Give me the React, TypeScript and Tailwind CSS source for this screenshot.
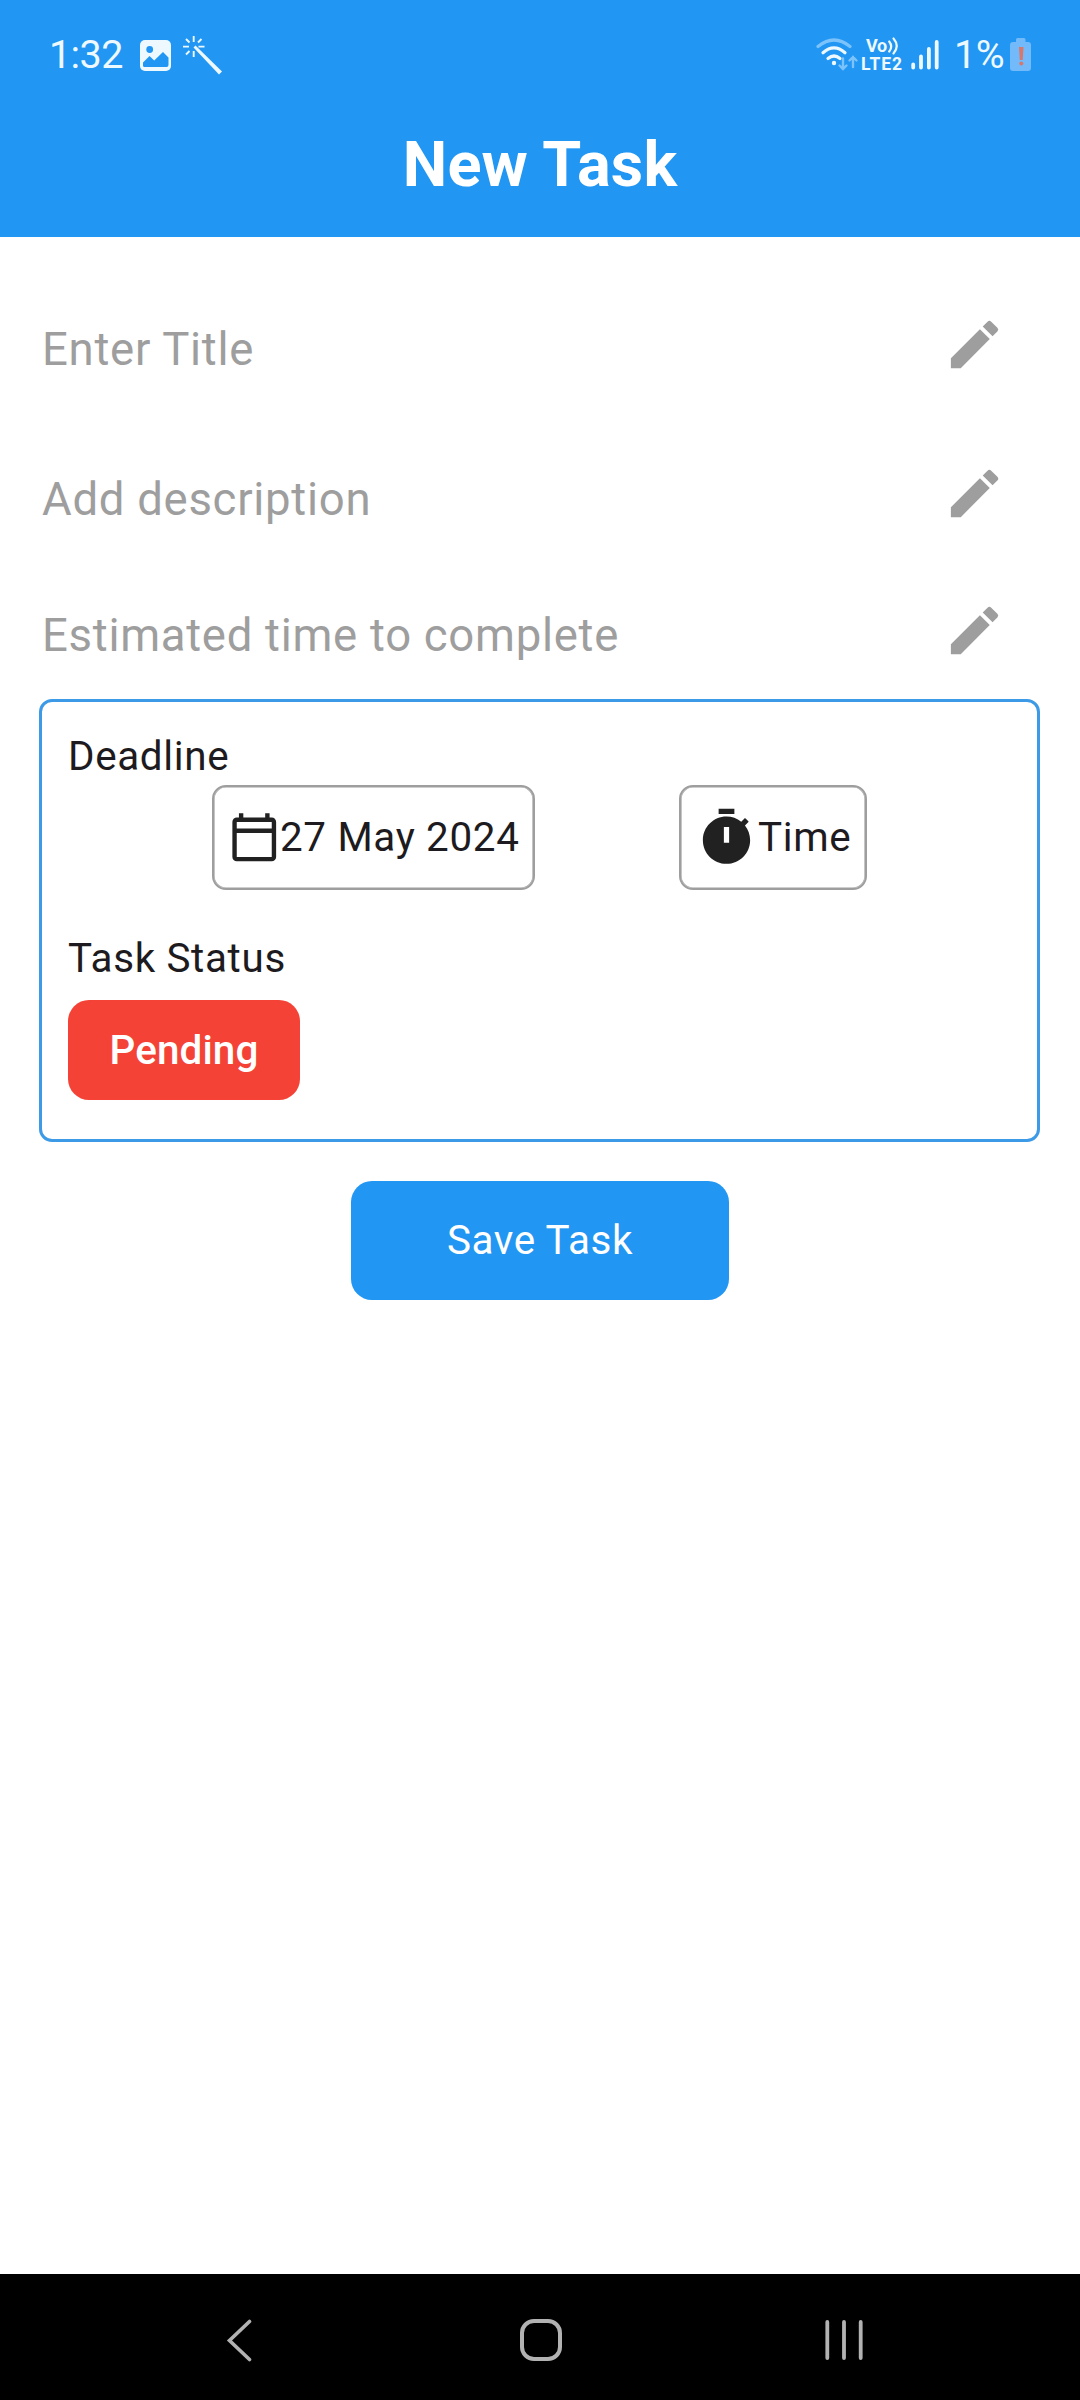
import React from "react";

function Pencil() {
  return (
    <svg className="h-[63px] w-[63px] shrink-0" viewBox="0 0 24 24" fill="#9e9e9e">
      <path d="M3 17.25V21h3.75L17.81 9.94l-3.75-3.75L3 17.25zM20.71 7.04a.996.996 0 0 0 0-1.41l-2.34-2.34a.996.996 0 0 0-1.41 0l-1.83 1.83 3.75 3.75 1.83-1.83z" />
    </svg>
  );
}

function Field({ label, offset = "pt-[10px]" }: { label: string; offset?: string }) {
  return (
    <div className="flex h-[63px] items-center justify-between pl-[42px] pr-[74px]">
      <span className={`${offset} text-[45.5px] leading-[63px] tracking-[0.72px] text-[#9e9e9e]`}>{label}</span>
      <Pencil />
    </div>
  );
}

function StatusBar() {
  return (
    <div className="flex h-[107px] items-start text-[#eef9ff]">
      <span className="ml-[49px] mt-[31px] w-[91px] text-[39.5px] leading-[48px] tracking-[-0.6px]">1:32</span>
      <svg className="mt-[36px] h-[40px] w-[31px]" viewBox="140 36 31 40">
        <rect x="140" y="40" width="31" height="31" rx="5" fill="#eef9ff" />
        <circle cx="149.7" cy="49.5" r="3.4" fill="#2196f3" />
        <path d="M143 66v-3.500l6.500-6.500 4.700 4.500 8.800-8.500 5.500 5.500V65a2 2 0 0 1-2 2H144.500a1.500 1.500 0 0 1-1.500-1z" fill="#2196f3" />
      </svg>
      <svg className="ml-[10px] mt-[34px] h-[42px] w-[43px]" viewBox="181 34 43 42" fill="none" stroke="#eef9ff">
        <path d="M193.500 47.500l2-2L222 71.500l-3 3z" fill="#eef9ff" stroke="none" />
        <path d="M193.700 36v6M193.700 51v6M183 46.600h6M198.500 46.600h6M186 39l3.500 3.500M201.500 39l-3.500 3.500M186 54.500l3.500-3.500" strokeWidth="1.900" />
      </svg>
      <div className="flex-1" />
      <svg className="mt-[34px] h-[42px] w-[44px]" viewBox="815 34 44 42" fill="none" strokeLinecap="round">
        <path d="M818 46.500Q834 33.500 850 46.500" stroke="#7cc3fb" strokeWidth="3.200" />
        <path d="M823 52.700Q834 43 845 52.700" stroke="#eef9ff" strokeWidth="3.200" />
        <path d="M828 58.500Q834 53.500 840 58.500" stroke="#eef9ff" strokeWidth="3.200" />
        <circle cx="834" cy="63" r="2.200" fill="#eef9ff" />
        <path d="M843 58.500v10M839.500 65.500l3.500 3.500 3.500-3.500M853 67v-10M849.500 60.500l3.500-3.500 3.500 3.500" stroke="#7cc3fb" strokeWidth="2.400" />
      </svg>
      <div className="ml-[2px] mt-[37px] w-[45px] font-bold">
        <div className="flex h-[18px] items-start pl-[5px] text-[18px] leading-[18px] tracking-[-0.3px]">
          Vo
          <svg className="-mt-px h-[20px] w-[13px]" viewBox="0 0 13 20" fill="none" stroke="#eef9ff" strokeWidth="2.200" strokeLinecap="round">
            <path d="M2.200 5.500q4 5 0 10M6.500 2.500q6.500 7.500 0 15" />
          </svg>
        </div>
        <div className="text-[17.5px] leading-[18px] tracking-[0.9px]">LTE2</div>
      </div>
      <svg className="ml-[4px] mt-[36px] h-[36px] w-[30px]" viewBox="910 36 30 36" stroke="#eef9ff" strokeWidth="3.800" strokeLinecap="round">
        <path d="M913.200 64.500v3M921 56.500v11M928.900 49v18.500M936.700 42v25.500" />
      </svg>
      <span className="ml-[14px] mt-[31px] w-[56px] text-[39.5px] leading-[48px] tracking-[-0.5px]">1%</span>
      <svg className="mr-[48px] mt-[36px] h-[36px] w-[22px]" viewBox="1010 36 22 36">
        <path d="M1016 41v-1.500a1.500 1.500 0 0 1 1.500-1.500h6.500a1.500 1.500 0 0 1 1.500 1.500V42h2.500a3 3 0 0 1 3 3v23a3 3 0 0 1-3 3h-15a3 3 0 0 1-3-3V45a3 3 0 0 1 3-3h3z" fill="#72bafa" />
        <path d="M1019 47h4.500l-.8 13h-2.900z" fill="#d9776a" />
        <circle cx="1021.300" cy="63.500" r="2" fill="#d9776a" />
      </svg>
    </div>
  );
}

function NavBar() {
  return (
    <nav className="flex h-[126px] items-center bg-black">
      <svg className="ml-[218px] h-[50px] w-[50px]" viewBox="0 0 50 50" fill="none" stroke="#b2b2b2" strokeWidth="3.600" strokeLinecap="round" strokeLinejoin="miter">
        <path d="M31.500 9.500L11.500 28.500 31.500 47.500" />
      </svg>
      <div className="ml-[252px] mt-[6px] h-[42px] w-[42px] rounded-[14px] border-4 border-[#b2b2b2]" />
      <svg className="ml-[261px] mt-[6px] h-[42px] w-[42px]" viewBox="823 2319 42 42" stroke="#b2b2b2" strokeWidth="3.800" strokeLinecap="round">
        <path d="M827.300 2322v36M844 2322v36M860.700 2322v36" />
      </svg>
    </nav>
  );
}

export default function App() {
  return (
    <div className="flex h-[2400px] w-[1080px] flex-col bg-white font-['Roboto',sans-serif] text-[40.4px] leading-[60px] text-[#1d1b20]">
      <header className="h-[237px] bg-[#2196f3]">
        <StatusBar />
        <h1 className="text-center text-[63px] font-bold leading-[115px] tracking-[0.2px] text-white">New Task</h1>
      </header>

      <main className="flex-1">
        <div className="pt-[76px]">
          <Field label="Enter Title" />
        </div>
        <div className="pt-[86px]">
          <Field label="Add description" offset="pt-[12px]" />
        </div>
        <div className="pt-[74px]">
          <Field label="Estimated time to complete" />
        </div>

        <section className="ml-[39px] mr-[40px] mt-[37px] h-[443px] rounded-[13px] border-[3px] border-[#3d9ae6] px-[26px] pt-[25px] tracking-[0.656px]">
          <div className="h-[58px]">Deadline</div>
          <div className="flex justify-evenly">
            <div className="flex h-[105px] w-[323px] items-center whitespace-nowrap rounded-[14px] border-2 border-[#9e9e9e] pl-[13.5px] shadow-[inset_0_0_0_0.6px_#9e9e9e]">
              <svg className="h-[52.5px] w-[52.5px] shrink-0" viewBox="0 0 24 24" fill="#212121">
                <path d="M20 3h-1V1h-2v2H7V1H5v2H4c-1.100 0-2 .9-2 2v16c0 1.100.9 2 2 2h16c1.100 0 2-.9 2-2V5c0-1.100-.9-2-2-2zm0 18H4V10h16v11zm0-13H4V5h16v3z" />
              </svg>
              27 May 2024
            </div>
            <div className="flex h-[105px] w-[188px] items-center rounded-[14px] border-2 border-[#9e9e9e] pl-[14px] shadow-[inset_0_0_0_0.6px_#9e9e9e]">
              <svg className="h-[63px] w-[63px] shrink-0" viewBox="0 0 24 24" fill="#212121">
                <path
                  fillRule="evenodd"
                  d="M9 1h6v2H9zM19.030 7.390l1.420-1.420c-.43-.51-.9-.99-1.410-1.410l-1.420 1.420A8.962 8.962 0 0 0 12 4c-4.970 0-9 4.030-9 9s4.020 9 9 9 9-4.030 9-9c0-2.120-.74-4.070-1.970-5.610zM13 14h-2V8h2v6z"
                />
              </svg>
              Time
            </div>
          </div>
          <div className="mt-[39px]">Task Status</div>
          <div className="mt-[11px] flex h-[100px] w-[232px] items-center justify-center rounded-[21px] bg-[#f44336] pt-px font-medium tracking-[0.1px] text-white">
            Pending
          </div>
        </section>

        <button className="mx-auto mt-[39px] flex h-[119px] w-[378px] items-center justify-center rounded-[21px] bg-[#2196f3] tracking-[0.6px] text-white">
          Save Task
        </button>
      </main>

      <NavBar />
    </div>
  );
}
